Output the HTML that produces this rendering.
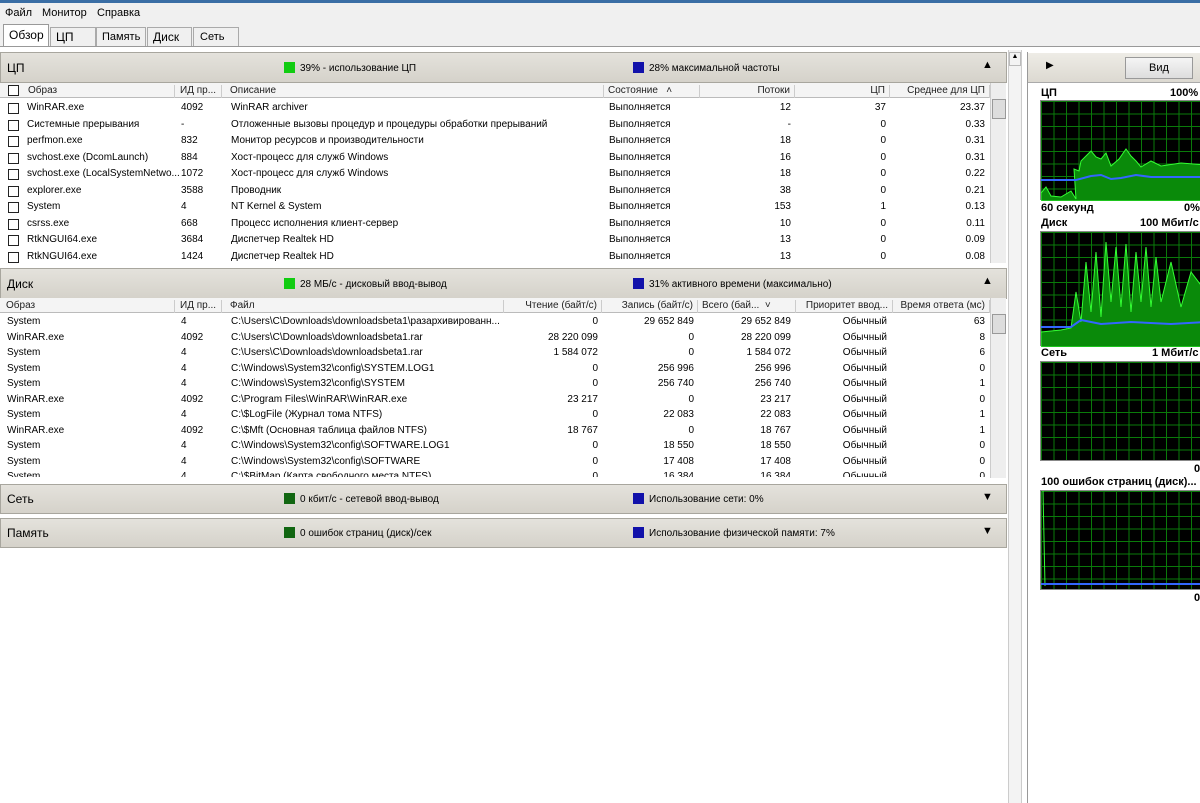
<!DOCTYPE html>
<html><head><meta charset="utf-8">
<style>
*{box-sizing:border-box;margin:0;padding:0}
body{width:1200px;height:803px;overflow:hidden;background:#fff;font-family:"Liberation Sans","DejaVu Sans",sans-serif;font-size:10px;color:#000;position:relative}
.a{position:absolute;white-space:nowrap}
.hdr{position:absolute;left:0;width:1007px;background:linear-gradient(#e4e2dc,#d5d2ca);border:1px solid #a8a69e;font-size:12px}
.th{position:absolute;left:0;height:15px;background:#f4f4f4;border-bottom:1px solid #bbb;width:990px}
.th span{position:absolute;top:2px;border-right:1px solid #ccc;height:13px;padding:0 4px;color:#222}
.sq{display:inline-block;width:11px;height:11px;vertical-align:-2px;margin-right:5px}
.cb{position:absolute;width:11px;height:11px;border:1px solid #222;background:#fff}
.sb{position:absolute;background:#eee;border-left:1px solid #ccc}
.g{position:absolute;background:#000;background-image:linear-gradient(90deg,#0a7a0a 1px,transparent 1px),linear-gradient(#0a7a0a 1px,transparent 1px);background-size:12.5px 12.5px;border:1px solid #888}
.lbl{position:absolute;font-weight:bold;font-size:11px}
</style></head><body>
<div class="a" style="left:0;top:0;width:1200px;height:3px;background:#3a6ea5"></div>
<div class="a" style="left:0;top:3px;width:1200px;height:20px;background:#f0f0f0;font-size:11px">
<span class="a" style="left:5px;top:4px">Файл</span><span class="a" style="left:42px;top:4px">Монитор</span><span class="a" style="left:97px;top:4px">Справка</span></div>
<div class="a" style="left:0;top:23px;width:1200px;height:24px;background:#f0f0f0;border-bottom:1px solid #999"></div>
<div class="a" style="left:3px;top:24px;width:46px;height:22px;background:#fff;border:1px solid #999;border-bottom:none;font-size:12px;padding:3px 5px">Обзор</div>
<div class="a" style="left:50px;top:27px;width:46px;height:19px;border:1px solid #aaa;border-bottom:none;font-size:12px;padding:2px 5px">ЦП</div>
<div class="a" style="left:96px;top:27px;width:50px;height:19px;border:1px solid #aaa;border-bottom:none;font-size:11px;padding:3px 5px">Память</div>
<div class="a" style="left:147px;top:27px;width:45px;height:19px;border:1px solid #aaa;border-bottom:none;font-size:12px;padding:2px 5px">Диск</div>
<div class="a" style="left:193px;top:27px;width:46px;height:19px;border:1px solid #aaa;border-bottom:none;font-size:11px;padding:3px 6px">Сеть</div>
<div class="a" style="left:0;top:47px;width:1200px;height:756px;background:#fff"></div>

<div class="hdr" style="top:52px;height:31px"><span class="a" style="left:6px;top:8px">ЦП</span>
<span class="a" style="left:283px;top:9px;font-size:10px"><span class="sq" style="background:#1c1"></span>39% - использование ЦП</span>
<span class="a" style="left:632px;top:9px;font-size:10px"><span class="sq" style="background:#11a"></span>28% максимальной частоты</span>
<span class="a" style="left:981px;top:6px;font-size:11px">▲</span></div>
<div class="th" style="top:83px"><span style="left:0;width:175px;padding-left:28px">Образ</span><span style="left:176px;width:46px">ИД пр...</span><span style="left:226px;width:378px">Описание</span><span style="left:604px;width:96px">Состояние &nbsp;&nbsp;˄</span><span style="left:700px;width:95px;text-align:right">Потоки</span><span style="left:795px;width:95px;text-align:right">ЦП</span><span style="left:890px;width:100px;text-align:right">Среднее для ЦП</span></div>
<div class="cb" style="left:8px;top:85px"></div>
<div id="cpu"></div>
<div class="sb" style="left:990px;top:83px;width:16px;height:180px"><div class="a" style="left:1px;top:16px;width:14px;height:20px;background:#ddd;border:1px solid #999"></div></div>

<div class="hdr" style="top:268px;height:31px"><span class="a" style="left:6px;top:8px">Диск</span>
<span class="a" style="left:283px;top:9px;font-size:10px"><span class="sq" style="background:#1c1"></span>28 МБ/с - дисковый ввод-вывод</span>
<span class="a" style="left:632px;top:9px;font-size:10px"><span class="sq" style="background:#11a"></span>31% активного времени (максимально)</span>
<span class="a" style="left:981px;top:6px;font-size:11px">▲</span></div>
<div class="th" style="top:298px"><span style="left:0;width:175px;padding-left:6px">Образ</span><span style="left:176px;width:46px">ИД пр...</span><span style="left:226px;width:278px">Файл</span><span style="left:504px;width:98px;text-align:right">Чтение (байт/с)</span><span style="left:602px;width:96px;text-align:right">Запись (байт/с)</span><span style="left:698px;width:98px">Всего (бай... &nbsp;˅</span><span style="left:796px;width:97px;text-align:right">Приоритет ввод...</span><span style="left:893px;width:97px;text-align:right">Время ответа (мс)</span></div>
<div id="dsk"></div>
<div class="sb" style="left:990px;top:298px;width:16px;height:180px"><div class="a" style="left:1px;top:16px;width:14px;height:20px;background:#ddd;border:1px solid #999"></div></div>

<div class="hdr" style="top:484px;height:30px"><span class="a" style="left:6px;top:7px">Сеть</span>
<span class="a" style="left:283px;top:8px;font-size:10px"><span class="sq" style="background:#161"></span>0 кбит/с - сетевой ввод-вывод</span>
<span class="a" style="left:632px;top:8px;font-size:10px"><span class="sq" style="background:#11a"></span>Использование сети: 0%</span>
<span class="a" style="left:981px;top:6px;font-size:11px">▼</span></div>
<div class="hdr" style="top:518px;height:30px"><span class="a" style="left:6px;top:7px">Память</span>
<span class="a" style="left:283px;top:8px;font-size:10px"><span class="sq" style="background:#161"></span>0 ошибок страниц (диск)/сек</span>
<span class="a" style="left:632px;top:8px;font-size:10px"><span class="sq" style="background:#11a"></span>Использование физической памяти: 7%</span>
<span class="a" style="left:981px;top:6px;font-size:11px">▼</span></div>

<div class="a" style="left:1008px;top:50px;width:14px;height:753px;background:#f3f3f3;border-left:1px solid #ccc;border-right:1px solid #ccc"><div class="a" style="left:0;top:2px;width:12px;height:14px;border:1px solid #bbb;font-size:7px;text-align:center">▲</div></div>
<div class="a" style="left:1027px;top:52px;width:173px;height:751px;border-left:1px solid #999;background:#fff"></div>
<div class="a" style="left:1028px;top:53px;width:172px;height:30px;background:linear-gradient(#eeece6,#dcd9d1);border-bottom:1px solid #aaa"><span class="a" style="left:18px;top:7px;font-size:10px">▶</span>
<div class="a" style="left:97px;top:4px;width:68px;height:22px;border:1px solid #999;background:linear-gradient(#f5f5f5,#ddd);font-size:11px;text-align:center;padding-top:4px">Вид</div></div>
<span class="lbl" style="left:1041px;top:87px">ЦП</span><span class="lbl" style="left:1170px;top:87px">100%</span>
<div class="g" style="left:1040px;top:100px;width:165px;height:100px"><svg class="a" style="left:0;top:0" width="165" height="100"><path d="M0 100L0 92 5 86 10 95 20 96 30 90 35 98 33 68 38 70 40 60 45 55 50 50 55 56 60 58 65 52 70 65 78 58 85 48 90 55 95 60 100 66 110 60 120 65 140 62 165 64 165 100Z" fill="#0a8a0a" stroke="#3f3" stroke-width="1"/><path d="M0 79L35 79 50 75 60 74 70 78 80 77 95 74 110 76 140 76 165 76" fill="none" stroke="#36f" stroke-width="2"/></svg></div>
<span class="lbl" style="left:1041px;top:202px">60 секунд</span><span class="lbl" style="left:1184px;top:202px">0%</span>
<span class="lbl" style="left:1041px;top:217px">Диск</span><span class="lbl" style="left:1140px;top:217px">100 Мбит/с</span>
<div class="g" style="left:1040px;top:231px;width:165px;height:115px"><svg class="a" style="left:0;top:0" width="165" height="115"><path d="M0 115L0 100 20 98 30 96 35 60 40 90 45 30 50 80 55 20 60 85 65 10 70 70 75 15 80 75 85 12 90 80 95 20 100 70 105 15 110 75 115 25 120 70 130 30 140 75 150 40 165 60 165 115Z" fill="#0a8a0a" stroke="#3f3"/><path d="M0 95L30 95 40 88 60 92 90 90 130 92 165 90" fill="none" stroke="#36f" stroke-width="2"/></svg></div>
<span class="lbl" style="left:1041px;top:347px">Сеть</span><span class="lbl" style="left:1152px;top:347px">1 Мбит/с</span>
<div class="g" style="left:1040px;top:361px;width:165px;height:100px"></div>
<span class="lbl" style="left:1194px;top:463px">0</span>
<span class="lbl" style="left:1041px;top:476px">100 ошибок страниц (диск)...</span>
<div class="g" style="left:1040px;top:490px;width:165px;height:100px"><svg class="a" style="left:0;top:0" width="165" height="100"><path d="M2 0L4 95" stroke="#3f3"/><path d="M0 93L165 93" stroke="#36f" stroke-width="2"/></svg></div>
<span class="lbl" style="left:1194px;top:592px">0</span>
<script>
var c=[["WinRAR.exe","4092","WinRAR archiver","12","37","23.37"],["Системные прерывания","-","Отложенные вызовы процедур и процедуры обработки прерываний","-","0","0.33"],["perfmon.exe","832","Монитор ресурсов и производительности","18","0","0.31"],["svchost.exe (DcomLaunch)","884","Хост-процесс для служб Windows","16","0","0.31"],["svchost.exe (LocalSystemNetwo...","1072","Хост-процесс для служб Windows","18","0","0.22"],["explorer.exe","3588","Проводник","38","0","0.21"],["System","4","NT Kernel & System","153","1","0.13"],["csrss.exe","668","Процесс исполнения клиент-сервер","10","0","0.11"],["RtkNGUI64.exe","3684","Диспетчер Realtek HD","13","0","0.09"],["RtkNGUI64.exe","1424","Диспетчер Realtek HD","13","0","0.08"]];
var h="";c.forEach(function(r,i){var y=102+i*16.5;h+='<div class="cb" style="left:8px;top:'+(y+1)+'px"></div><span class="a" style="left:27px;top:'+y+'px">'+r[0]+'</span><span class="a" style="left:181px;top:'+y+'px">'+r[1]+'</span><span class="a" style="left:231px;top:'+y+'px">'+r[2]+'</span><span class="a" style="left:609px;top:'+y+'px">Выполняется</span><span class="a" style="left:700px;width:91px;text-align:right;top:'+y+'px">'+r[3]+'</span><span class="a" style="left:795px;width:91px;text-align:right;top:'+y+'px">'+r[4]+'</span><span class="a" style="left:890px;width:95px;text-align:right;top:'+y+'px">'+r[5]+'</span>'});
document.getElementById("cpu").innerHTML=h;
var d=[["System","4","C:\\Users\\C\\Downloads\\downloadsbeta1\\разархивированн...","0","29 652 849","29 652 849","63"],["WinRAR.exe","4092","C:\\Users\\C\\Downloads\\downloadsbeta1.rar","28 220 099","0","28 220 099","8"],["System","4","C:\\Users\\C\\Downloads\\downloadsbeta1.rar","1 584 072","0","1 584 072","6"],["System","4","C:\\Windows\\System32\\config\\SYSTEM.LOG1","0","256 996","256 996","0"],["System","4","C:\\Windows\\System32\\config\\SYSTEM","0","256 740","256 740","1"],["WinRAR.exe","4092","C:\\Program Files\\WinRAR\\WinRAR.exe","23 217","0","23 217","0"],["System","4","C:\\$LogFile (Журнал тома NTFS)","0","22 083","22 083","1"],["WinRAR.exe","4092","C:\\$Mft (Основная таблица файлов NTFS)","18 767","0","18 767","1"],["System","4","C:\\Windows\\System32\\config\\SOFTWARE.LOG1","0","18 550","18 550","0"],["System","4","C:\\Windows\\System32\\config\\SOFTWARE","0","17 408","17 408","0"],["System","4","C:\\$BitMap (Карта свободного места NTFS)","0","16 384","16 384","0"]];
h="";d.forEach(function(r,i){var y=316+i*15.5;if(i==10)y=471;h+='<span class="a" style="left:7px;top:'+y+'px">'+r[0]+'</span><span class="a" style="left:181px;top:'+y+'px">'+r[1]+'</span><span class="a" style="left:231px;top:'+y+'px">'+r[2]+'</span><span class="a" style="left:504px;width:94px;text-align:right;top:'+y+'px">'+r[3]+'</span><span class="a" style="left:602px;width:92px;text-align:right;top:'+y+'px">'+r[4]+'</span><span class="a" style="left:698px;width:93px;text-align:right;top:'+y+'px">'+r[5]+'</span><span class="a" style="left:796px;width:91px;text-align:right;top:'+y+'px">Обычный</span><span class="a" style="left:893px;width:92px;text-align:right;top:'+y+'px">'+r[6]+'</span>'});
document.getElementById("dsk").innerHTML='<div style="position:absolute;left:0;top:314px;width:990px;height:163px;overflow:hidden">'+h.replace(/top:(\d+(\.\d+)?)px/g,function(m,v){return "top:"+(v-314)+"px"})+'</div>';
</script>
</body></html>
